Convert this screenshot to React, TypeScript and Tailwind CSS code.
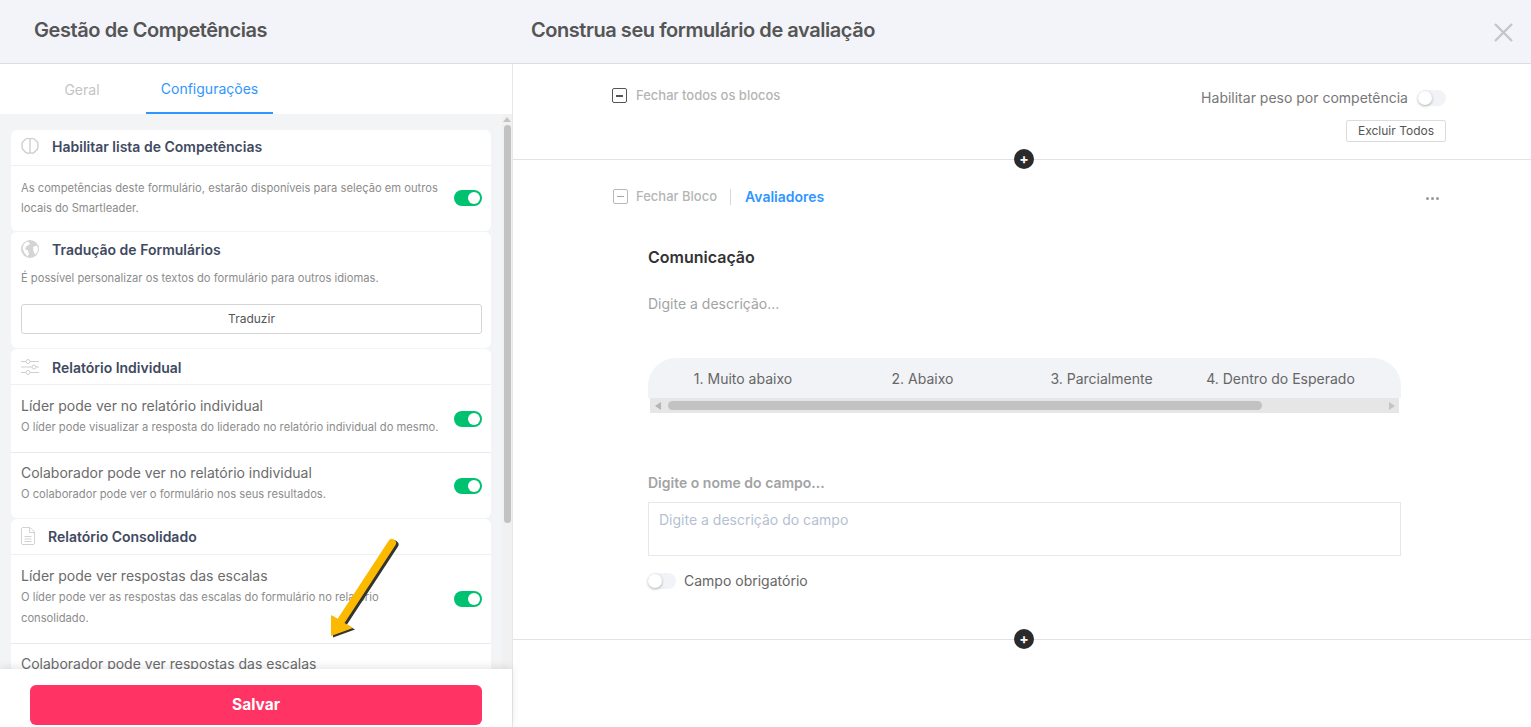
import React from "react";

const Toggle = ({ on }: { on: boolean }) =>
  on ? (
    <div className="flex h-4 w-7 shrink-0 items-center justify-end rounded-full bg-[#00c170] pr-[2px]">
      <div className="size-3 rounded-full bg-white" />
    </div>
  ) : (
    <div className="flex h-4 w-7 shrink-0 items-center rounded-full bg-[#f1f3f7]">
      <div className="size-[14px] rounded-full bg-white shadow-[0_1px_3px_rgba(0,0,0,0.3)]" />
    </div>
  );

const CardHeader = ({ icon, title, pad = "pb-[1px]" }: { icon: React.ReactNode; title: string; pad?: string }) => (
  <div className={`flex h-[36px] items-center gap-[13px] border-b border-[#eeeff1] pl-[10px] ${pad}`}>
    {icon}
    <span className="text-[14px] font-semibold text-[#3f4a5f]">{title}</span>
  </div>
);

const OptionRow = ({ title, desc, border }: { title: string; desc?: string; border?: boolean }) => (
  <div className={`flex items-center justify-between pl-[10px] pr-[9px] ${border ? "border-t border-[#e8e9ec]" : ""}`}>
    <div className={`w-[422px] pb-[14px] ${border ? "pt-[10px]" : "pt-[11px]"}`}>
      <div className="mb-px text-[14px] leading-[20px] text-[#6b6b6b]">{title}</div>
      {desc && <div className={`text-[11.2px] leading-[21px] text-[#8c8c8c] ${border ? "mt-px" : ""}`}>{desc}</div>}
    </div>
    {desc && <Toggle on />}
  </div>
);

const BrainIcon = () => (
  <svg width="18" height="18" viewBox="0 0 18 18" fill="none" stroke="#d2d2d2" strokeWidth="1.5">
    <path d="M9 2C7 .9 4.4 1.6 3.4 3.4 1.6 4.3.7 6.4 1.2 8.4.7 10.6 1.6 12.8 3.4 13.9 4.4 16 7 16.8 9 15.6 11 16.8 13.6 16 14.6 13.9 16.4 12.8 17.3 10.6 16.8 8.4 17.3 6.4 16.4 4.3 14.6 3.4 13.6 1.6 11 .9 9 2Z" />
    <path d="M9 2V15.6" />
  </svg>
);

const GlobeIcon = () => (
  <svg width="18" height="18" viewBox="0 0 18 18">
    <circle cx="9" cy="9" r="9" fill="#d4d4d4" />
    <path d="M6 1.5 9 3 8 5 5.5 6 4 9 7 10.5 8 14 6.5 16.5 3.5 13 1.5 8 3 4ZM12 7l3.5-1.5L17 8l-.5 4-2.5 2.5-1.5-3Z" fill="#fff" />
  </svg>
);

const SlidersIcon = () => (
  <svg width="18" height="16" viewBox="0 0 18 16" fill="none" stroke="#cfcfcf" strokeWidth="1">
    <path d="M0 2.5H5M9 2.5H18M0 8H11M15 8H18M0 13.5H5M9 13.5H18" />
    <circle cx="7" cy="2.5" r="2" />
    <circle cx="13" cy="8" r="2" />
    <circle cx="7" cy="13.5" r="2" />
  </svg>
);

const DocIcon = () => (
  <svg width="14" height="18" viewBox="0 0 14 18" fill="none" stroke="#d2d2d2" strokeWidth="1">
    <path d="M1.5.5H9L13.5 5V16a1.5 1.5 0 0 1-1.5 1.5H2A1.5 1.5 0 0 1 .5 16V2A1.5 1.5 0 0 1 1.5.5Z" />
    <path d="M8.5.5V5.5H13.5" />
    <path d="M3.5 9.5H10.5M3.5 12H10.5M3.5 14.5H10.5" />
  </svg>
);

const MinusBox = ({ dark }: { dark?: boolean }) => (
  <div className={`flex size-[15px] items-center justify-center rounded-[2px] border ${dark ? "border-[#555]" : "border-[#b8b8b8]"}`}>
    <div className={`h-[1.5px] w-[7px] ${dark ? "bg-[#555]" : "bg-[#a5a5a5]"}`} />
  </div>
);

const Divider = () => (
  <div className="relative h-px bg-[#e3e3e3]">
    <div className="absolute left-[501px] top-[-10px] flex size-[20px] items-center justify-center rounded-full bg-[#2b2b2b] text-[14px] font-bold leading-none text-white">+</div>
  </div>
);

export default function App() {
  return (
    <div className="flex h-[727px] w-[1531px] flex-col overflow-hidden bg-white font-['Inter',sans-serif]">
      <header className="flex h-[64px] shrink-0 items-center border-b border-[#dcdde1] bg-[#f2f4f9] pb-[3px]">
        <h1 className="ml-[34px] w-[497px] text-[20px] font-semibold tracking-[-0.43px] text-[#555]">Gestão de Competências</h1>
        <h2 className="flex-1 text-[20px] font-semibold tracking-[-0.45px] text-[#555]">Construa seu formulário de avaliação</h2>
        <svg className="mr-[18px] mt-[4px]" width="19" height="19" viewBox="0 0 19 19" stroke="#c2c6c9" strokeWidth="2.4">
          <path d="M1 1 18 18M18 1 1 18" />
        </svg>
      </header>

      <div className="flex min-h-0 flex-1">
        <aside className="relative flex w-[513px] shrink-0 flex-col border-r border-[#e8e8e8] bg-[#f3f4f6]">
          <nav className="flex h-[50px] shrink-0 bg-white pl-[18px] text-[14px]">
            <div className="flex w-[128px] items-center justify-center text-[#c4c4c4]">Geral</div>
            <div className="flex w-[127px] items-center justify-center border-b-2 border-[#2f96ff] text-[#2f96ff]">Configurações</div>
          </nav>

          <div className="flex min-h-0 flex-1 overflow-hidden">
            <div className="flex w-[491px] flex-col gap-px pl-[11px] pt-[16px]">
              <section className="h-[101px] shrink-0 rounded-[6px] bg-white">
                <CardHeader icon={<BrainIcon />} title="Habilitar lista de Competências" pad="pb-[3px]" />
                <div className="flex items-center justify-between pl-[10px] pr-[9px] pt-[12px]">
                  <p className="w-[422px] text-[11.2px] leading-[20px] text-[#8c8c8c]">
                    As competências deste formulário, estarão disponíveis para seleção em outros locais do Smartleader.
                  </p>
                  <Toggle on />
                </div>
              </section>

              <section className="h-[116px] shrink-0 rounded-[6px] bg-white pl-[10px] pr-[9px]">
                <div className="flex h-[36px] items-center gap-[13px] pb-[2px]">
                  <GlobeIcon />
                  <span className="text-[14px] font-semibold text-[#3f4a5f]">Tradução de Formulários</span>
                </div>
                <p className="text-[11.2px] leading-[20px] text-[#8c8c8c]">É possível personalizar os textos do formulário para outros idiomas.</p>
                <button className="mt-[16px] flex h-[30px] w-full items-center justify-center rounded-[3px] border border-[#d5d5d5] text-[12px] text-[#555]">Traduzir</button>
              </section>

              <section className="h-[169px] shrink-0 rounded-[6px] bg-white">
                <CardHeader icon={<SlidersIcon />} title="Relatório Individual" pad="pt-[1px]" />
                <OptionRow title="Líder pode ver no relatório individual" desc="O líder pode visualizar a resposta do liderado no relatório individual do mesmo." />
                <OptionRow title="Colaborador pode ver no relatório individual" desc="O colaborador pode ver o formulário nos seus resultados." border />
              </section>

              <section className="shrink-0 rounded-[6px] bg-white">
                <CardHeader icon={<DocIcon />} title="Relatório Consolidado" />
                <OptionRow title="Líder pode ver respostas das escalas" desc="O líder pode ver as respostas das escalas do formulário no relatório consolidado." />
                <OptionRow title="Colaborador pode ver respostas das escalas" border />
              </section>
            </div>

            <div className="ml-[11px] flex w-[10px] shrink-0 flex-col items-center bg-[#f1f1f1] pt-[3px]">
              <div className="size-0 border-x-[4px] border-b-[5px] border-x-transparent border-b-[#c4c4c4]" />
              <div className="mt-[3px] h-[398px] w-[7px] shrink-0 rounded-full bg-[#c2c2c2]" />
            </div>
          </div>

          <div className="absolute bottom-0 left-0 flex h-[58px] w-[512px] items-start bg-white pl-[30px] pt-[16px] shadow-[0_-2px_8px_rgba(0,0,0,0.1)]">
            <button className="h-[40px] w-[452px] rounded-[6px] bg-[#ff3465] text-[15.5px] font-bold text-white">Salvar</button>
          </div>

          <svg className="absolute left-[325px] top-[472px]" width="80" height="106" viewBox="0 0 80 106" fill="none">
            <path d="M67 7 16 85" stroke="#333" strokeWidth="8" strokeLinecap="round" transform="translate(2.5 1.5)" />
            <path d="M6 100 6 79 28 92Z" fill="#333" transform="translate(2 1.5)" />
            <path d="M67 7 16 85" stroke="#fbb900" strokeWidth="8" strokeLinecap="round" />
            <path d="M6 100 6 79 28 92Z" fill="#fbb900" />
          </svg>
        </aside>

        <main className="min-w-0 flex-1">
          <div className="flex h-[95px] items-start justify-between pl-[99px] pr-[85px]">
            <div className="mt-[22px] flex items-center gap-[9px]">
              <MinusBox dark />
              <span className="text-[13px] font-medium text-[#b5b5b5]">Fechar todos os blocos</span>
            </div>
            <div className="mt-[23px] flex flex-col items-end gap-[12px]">
              <div className="flex items-center gap-[10px]">
                <span className="text-[14px] text-[#777]">Habilitar peso por competência</span>
                <Toggle on={false} />
              </div>
              <button className="flex h-[22px] w-[100px] items-center justify-center rounded-[2px] border border-[#dcdcdc] text-[12px] text-[#555]">Excluir Todos</button>
            </div>
          </div>
          <Divider />

          <section className="h-[479px]">
            <div className="flex items-center pl-[100px] pr-[92px] pt-[26px]">
              <MinusBox />
              <span className="ml-[8px] text-[13px] font-medium text-[#b5b5b5]">Fechar Bloco</span>
              <div className="ml-[13px] mr-[14px] h-[16px] w-px bg-[#d8d8d8]" />
              <span className="text-[14px] font-semibold text-[#2f96ff]">Avaliadores</span>
              <div className="ml-auto mt-[4px] flex gap-[2px]">
                <div className="size-[3px] rounded-full bg-[#999]" />
                <div className="size-[3px] rounded-full bg-[#999]" />
                <div className="size-[3px] rounded-full bg-[#999]" />
              </div>
            </div>

            <div className="pl-[135px] pr-[130px]">
              <h3 className="mt-[40px] text-[16px] font-semibold leading-[20px] text-[#333]">Comunicação</h3>
              <p className="mt-[27px] text-[14px] leading-[20px] text-[#a3a3a3]">Digite a descrição...</p>

              <div className="mt-[44px] w-[753px]">
                <div className="flex h-[40px] rounded-t-[28px] bg-[#f1f3f7] text-[14px] text-[#666]">
                  <div className="flex w-[190px] items-center justify-center">1. Muito abaixo</div>
                  <div className="flex w-[169px] items-center justify-center">2. Abaixo</div>
                  <div className="flex w-[189px] items-center justify-center">3. Parcialmente</div>
                  <div className="flex w-[169px] items-center justify-center">4. Dentro do Esperado</div>
                </div>
                <div className="mx-[2px] flex h-[15px] items-center bg-[#e6e6e6] pl-[5px] pr-[4px]">
                  <div className="size-0 border-y-[4px] border-r-[6px] border-y-transparent border-r-[#b5b5b5]" />
                  <div className="ml-[7px] h-[9px] w-[594px] rounded-full bg-[#c2c2c2]" />
                  <div className="ml-auto size-0 border-y-[4px] border-l-[6px] border-y-transparent border-l-[#c4c4c4]" />
                </div>
              </div>

              <p className="mt-[60px] text-[14px] font-semibold leading-[20px] text-[#a3a3a3]">Digite o nome do campo...</p>
              <div className="mt-[9px] h-[54px] w-[753px] border border-[#e8e8e8] px-[10px] py-[7px] text-[14px] leading-[20px] text-[#b4bfd2]">Digite a descrição do campo</div>
              <div className="mt-[14px] flex items-center gap-[8px]">
                <Toggle on={false} />
                <span className="text-[14px] text-[#666]">Campo obrigatório</span>
              </div>
            </div>
          </section>
          <Divider />
        </main>
      </div>
    </div>
  );
}
